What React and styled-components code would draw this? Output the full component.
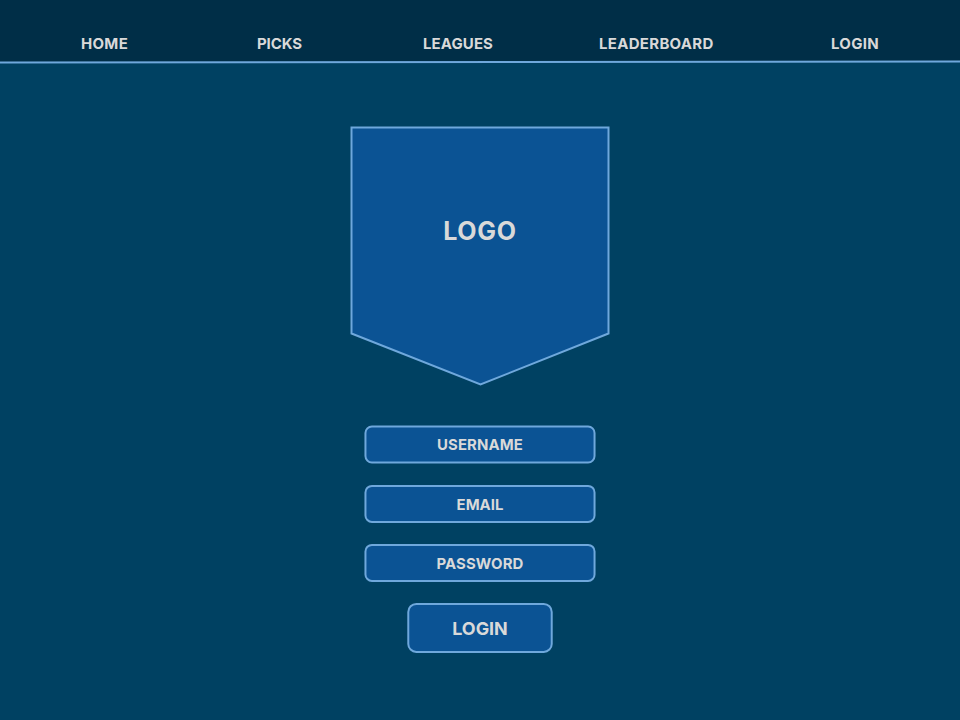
import React from "react";
import styled, { createGlobalStyle } from "styled-components";

const Global = createGlobalStyle`
  * { box-sizing: border-box; }
  body { margin: 0; background: #004162; }
`;

const Page = styled.div`
  width: 960px;
  height: 720px;
  overflow: hidden;
  display: flex;
  flex-direction: column;
  align-items: center;
  background: #004162;
  color: #d9d9d9;
  font-family: "Proxima Nova", Inter, sans-serif;
  font-weight: 700;
`;

const Header = styled.header`
  width: 100%;
  height: 64px;
  flex: none;
  background: linear-gradient(#002e47 62px, transparent 62px);
`;

const Nav = styled.nav`
  height: 60px;
  display: flex;
  padding: 34px 0 0 81px;
`;

const Label = styled.span`
  display: block;
  font-size: ${(p) => p.$size || 15}px;
  letter-spacing: ${(p) => p.$ls || 0}px;
  line-height: 20px;
  white-space: nowrap;
`;

const NavLink = styled(Label)`
  width: ${(p) => p.$w}px;
  margin-right: ${(p) => p.$gap}px;
`;

const Rule = styled.svg`
  display: block;
  width: 960px;
  height: 4px;
`;

const Logo = styled.div`
  display: grid;
  width: 262px;
  height: 262px;
  margin-top: 61px;
  flex: none;
  > * { grid-area: 1 / 1; }
`;

const LogoText = styled.div`
  justify-self: center;
  padding-top: 90px;
  font-size: 25px;
  letter-spacing: 0.7px;
  line-height: 32px;
`;

const Form = styled.form`
  display: flex;
  flex-direction: column;
  align-items: center;
  gap: 21px;
  margin-top: 38px;
`;

const Field = styled.div`
  display: flex;
  align-items: center;
  justify-content: center;
  width: 232px;
  height: 38px;
  padding-top: ${(p) => (p.$raised ? 0 : 1)}px;
  border: 2px solid #6fa8dc;
  border-radius: 7.5px;
  background: #0b5394;
  transform: translateY(${(p) => p.$shift}px) scaleX(0.996);
`;

const Submit = styled(Field)`
  width: 146px;
  height: 50px;
  border-radius: 9px;
`;

const links = [
  ["HOME", 47, 129, 0.3],
  ["PICKS", 46, 120, -0.1],
  ["LEAGUES", 71, 105, 0.1],
  ["LEADERBOARD", 115, 117, 0.3],
  ["LOGIN", 48, 0, 0.3],
];

export default function App() {
  return (
    <Page>
      <Global />
      <Header>
        <Nav>
          {links.map(([text, width, gap, spacing]) => (
            <NavLink key={text} $w={width} $gap={gap} $ls={spacing}>{text}</NavLink>
          ))}
        </Nav>
        <Rule viewBox="0 0 960 4">
          <path d="M0 2.5L960 1.5" stroke="#6fa8dc" strokeWidth="2" />
        </Rule>
      </Header>
      <Logo>
        <svg width="262" height="262" viewBox="0 0 262 262">
          <path d="M2.5 2.5H259.5V208.5L131.5 259.5L2.5 208.5Z" fill="#0b5394" stroke="#6fa8dc" strokeWidth="2" />
        </svg>
        <LogoText>LOGO</LogoText>
      </Logo>
      <Form>
        <Field $shift={0.5} $raised><Label $ls={0.1}>USERNAME</Label></Field>
        <Field $shift={0.9}><Label>EMAIL</Label></Field>
        <Field $shift={0.9}><Label $ls={0.1}>PASSWORD</Label></Field>
        <Submit $shift={0.9}><Label $size={18}>LOGIN</Label></Submit>
      </Form>
    </Page>
  );
}
